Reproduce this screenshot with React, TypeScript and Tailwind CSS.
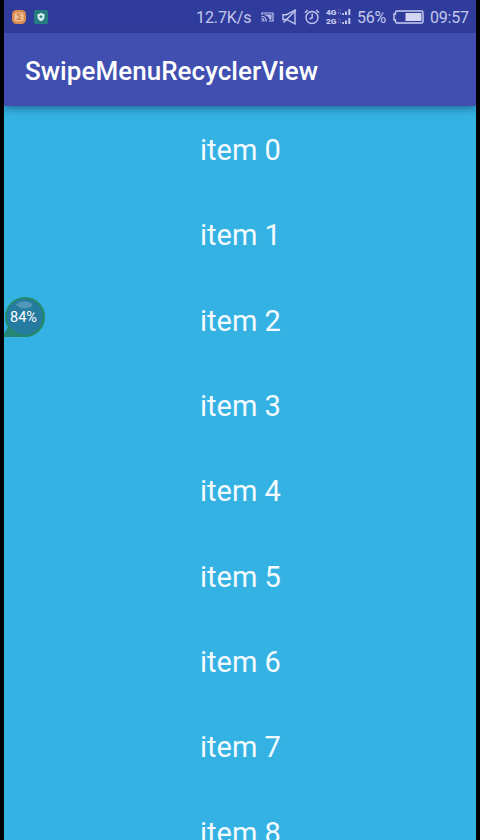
import React from "react";

const items = [0, 1, 2, 3, 4, 5, 6, 7, 8];

function AppIcon() {
  return (
    <svg className="ml-[8px] shrink-0" width="14" height="14" viewBox="0 0 14 14">
      <rect width="14" height="14" rx="4.5" fill="#d98a4c" />
      <rect x="2.500" y="2.500" width="9" height="9" rx="2" fill="#efc097" />
      <path d="M4.500 4h5M5 4.500l3.500 2.500-3 2.500h4" fill="none" stroke="#d07f48" strokeWidth="1.200" />
    </svg>
  );
}

function ShieldIcon() {
  return (
    <svg className="ml-2 shrink-0" width="14" height="14" viewBox="0 0 14 14">
      <rect width="14" height="14" rx="1.500" fill="#267b80" />
      <path d="M3.500 4c1.500 0 2.500-.5 3.500-1.300C8 3.500 9 4 10.500 4v3c0 2-1.500 3.300-3.500 4.200C5 10.300 3.500 9 3.500 7z" fill="#d9eeee" />
      <path d="M7 5.200v3M5.500 6.700h3" stroke="#267b80" strokeWidth="1.200" />
    </svg>
  );
}

function CastIcon() {
  return (
    <svg className="ml-[9px] shrink-0" width="13" height="10" viewBox="0 0 13 10" fill="none" stroke="#bfc5eb">
      <path d="M1 3V1h11v8H8" strokeWidth="1.200" />
      <path d="M3 2.500h7.500v5H8.500C8 5 5.500 3.200 3 2.900z" fill="#b0b7e4" stroke="none" />
      <path d="M.5 4.500c3 0 4.800 2 4.800 5M.5 6.700c1.500 0 2.500 1.100 2.500 2.700" strokeWidth="1.200" />
      <circle cx="1" cy="9" r=".7" fill="#b9bfe8" stroke="none" />
    </svg>
  );
}

function MuteIcon() {
  return (
    <svg className="ml-[8px] shrink-0" width="15" height="16" viewBox="0 0 15 16" fill="none" stroke="#bfc5eb" strokeWidth="1.400">
      <path d="M1 5.700h3.500L13 1.200v13.600L4.500 10.500H1z" />
      <path d="M14 1L1.500 13.500" />
    </svg>
  );
}

function AlarmIcon() {
  return (
    <svg className="ml-[7px] shrink-0" width="16" height="16" viewBox="0 0 16 16" fill="none" stroke="#bfc5eb" strokeWidth="1.400">
      <circle cx="8" cy="8.500" r="6" />
      <path d="M8.200 4.500v4.200L5.500 10M1 3.700L3.700 1M15 3.700L12.300 1" />
    </svg>
  );
}

function SignalIcon() {
  return (
    <svg className="ml-[6px] shrink-0" width="26" height="17" viewBox="0 0 26 17" fill="#c6cbee">
      <text x="0" y="6.700" fontSize="8" fontWeight="900" textLength="10.500" lengthAdjust="spacingAndGlyphs" fontFamily="Roboto, sans-serif">4G</text>
      <text x="0" y="15.700" fontSize="8" fontWeight="900" textLength="10.500" lengthAdjust="spacingAndGlyphs" fontFamily="Roboto, sans-serif">2G</text>
      <path opacity=".55" d="M12 1.500h1v1h-1zM14 1.500h1v1h-1zM12 4h1v1.500h-1zM14 4.500h1v2h-1zM12 10.500h1v1h-1zM14 11.500h1v1h-1zM12 13.500h1v1h-1zM14 14h1v1h-1z" />
      <path d="M16.200 5h1.700v2h-1.700zM19 3.500h2v3.500h-2zM22.300 1h2v6h-2zM16.200 14h1.700v2h-1.700zM19 12.500h2v3.500h-2zM22.300 10h2v6h-2z" />
    </svg>
  );
}

function BatteryIcon() {
  return (
    <svg className="ml-[7px] shrink-0" width="31" height="14" viewBox="0 0 31 14">
      <path d="M4 1h24.500a1.500 1.500 0 011.500 1.500v9a1.500 1.500 0 01-1.500 1.500H4a1.500 1.500 0 01-1.500-1.500V10H1V4h1.500V2.500A1.500 1.500 0 014 1z" fill="none" stroke="#c9cdf0" strokeWidth="1.400" />
      <rect x="12.500" y="3" width="16" height="8" fill="#d3d6f2" />
    </svg>
  );
}

export default function App() {
  return (
    <div className="h-[840px] w-[480px] overflow-hidden bg-black px-1 font-['Roboto',sans-serif]">
      <div className="relative flex h-full flex-col overflow-hidden bg-[#34b2e4]">
        <div className="flex h-[33px] shrink-0 items-center bg-[#303c9c] text-[16px] leading-none text-[#c3c8eb]">
          <AppIcon />
          <ShieldIcon />
          <span className="ml-[148px] w-[56px] whitespace-nowrap pt-[2px] tracking-[-0.1px]">12.7K/s</span>
          <CastIcon />
          <MuteIcon />
          <AlarmIcon />
          <SignalIcon />
          <span className="ml-[5px] w-[29px] whitespace-nowrap pt-[2px] tracking-[-0.3px]">56%</span>
          <BatteryIcon />
          <span className="ml-[6px] whitespace-nowrap pt-[2px] tracking-[-0.2px]">09:57</span>
        </div>
        <header className="z-10 flex h-[73px] shrink-0 items-center bg-[#404fb0] pl-[21px] pt-[2px] shadow-[0_3px_7px_rgba(20,60,100,0.55)]">
          <h1 className="text-[26px] font-medium leading-none tracking-[0.04px] text-white">SwipeMenuRecyclerView</h1>
        </header>
        <main className="flex flex-col">
          {items.map((n) => (
            <div key={n} className="flex h-[85.300px] shrink-0 items-center justify-center pl-px pt-[4px] text-[29px] leading-none text-[#f4fbfe]">
              item {n}
            </div>
          ))}
        </main>
        <div className="absolute left-0 top-[297px] flex h-[40px] w-[41px] items-center justify-center text-[14.500px] leading-none text-white">
          <svg className="absolute inset-0" width="41" height="40" viewBox="0 0 41 40">
            <path d="M0 40V37L4 30L21 40z" fill="#258678" />
            <circle cx="21" cy="20" r="20" fill="#258a68" />
            <circle cx="20.700" cy="19.800" r="18" fill="#257ba0" />
            <path d="M12 7.500Q20.500 1 29 7.500Q26 11.500 20.500 11.500T12 7.500z" fill="#5297b7" />
          </svg>
          <span className="relative right-px pt-[3px]">84%</span>
        </div>
      </div>
    </div>
  );
}
